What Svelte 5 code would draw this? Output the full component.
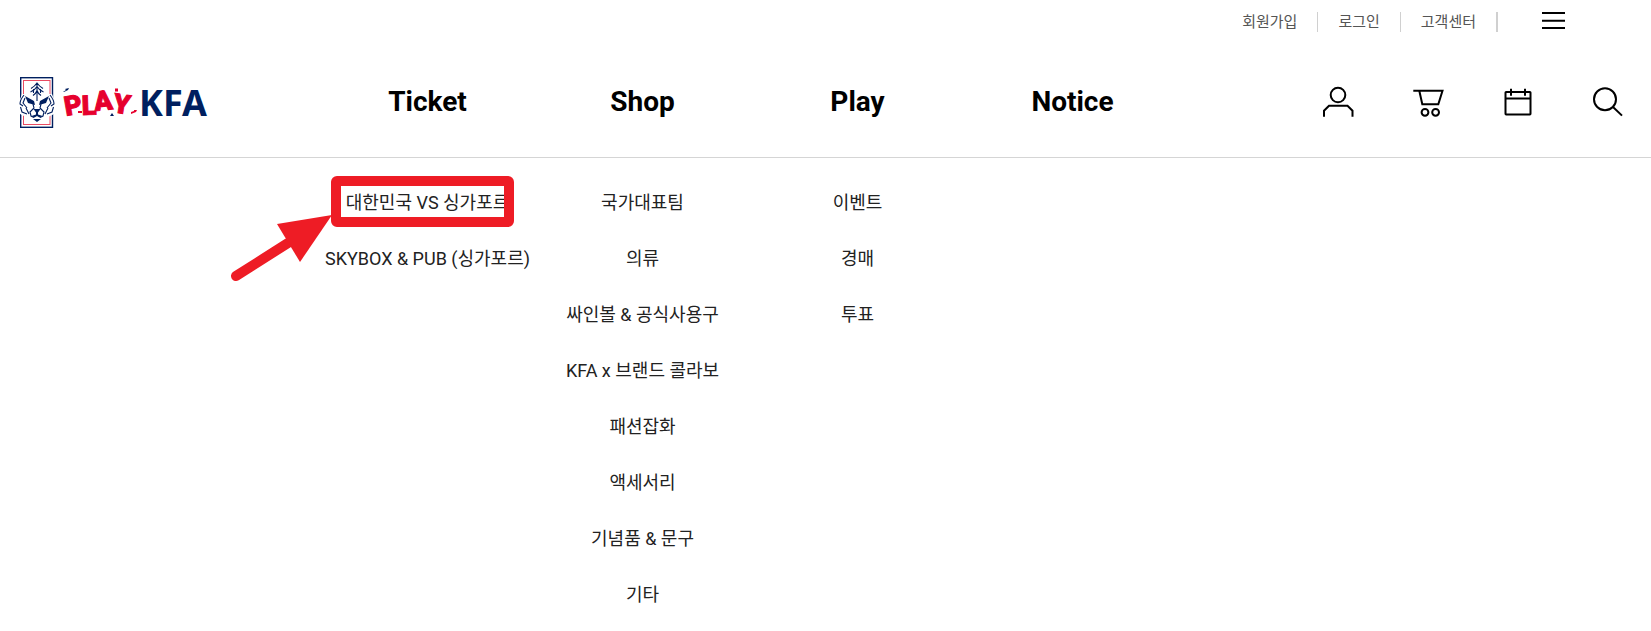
<script>
  const utilities = ['회원가입', '로그인', '고객센터'];
  const columns = [
    { title: 'Ticket', items: ['대한민국 VS 싱가포르', 'SKYBOX & PUB (싱가포르)'], marked: 0 },
    {
      title: 'Shop',
      items: ['국가대표팀', '의류', '싸인볼 & 공식사용구', 'KFA x 브랜드 콜라보', '패션잡화', '액세서리', '기념품 & 문구', '기타']
    },
    { title: 'Play', items: ['이벤트', '경매', '투표'] },
    { title: 'Notice', items: [] }
  ];
</script>

<header>
  <div class="utility">
    <ul>
      {#each utilities as label}
        <li><a href="#top">{label}</a></li>
      {/each}
    </ul>
    <button class="burger" aria-label="전체 메뉴">
      <svg width="24" height="18" viewBox="0 0 24 18"><path d="M0 1h23M0 8.7h23M0 16h23" stroke="#000" stroke-width="2" /></svg>
    </button>
  </div>

  <div class="main row">
    <a class="logo" href="#top" aria-label="PLAY KFA">
      <svg width="190" height="56" viewBox="18 74 190 56">
        <rect x="20.7" y="77.7" width="31.8" height="49.6" fill="#fff" stroke="#001f5f" stroke-width="1.4" />
        <rect x="23.5" y="80.5" width="26.5" height="44" fill="none" stroke="#e94b62" stroke-width="1" />
        <path d="M37 81l7 6 2 7 6 0 3 8-1 12-6 3-3 3-8 4-8-4-3-3-6-3-1-12 3-8 6 0 2-7z" fill="#fff" />
        <g fill="none" stroke="#001f5f" stroke-width="1.1">
          <path d="M31 88.5q4-2.500 6-5.500 2 3 6 5.500M30.500 92q4.500-2 6.500-5.500 2 3.500 6.500 5.500M33 95.500q3-2 4-5 1 3 4 5M37 83v18M33.500 89v4M40.500 89v4" />
          <path d="M24 95q-4 5-4 9l3 2M50 95q4 5 4 9l-3 2M25 98l-2 5 4 5M49 98l2 5-4 5M20.500 107l1.500 5 5 2M53.500 107l-1.500 5-5 2" />
          <path d="M33 104l1 4-4 4 1 4 3 1.500M41 104l-1 4 4 4-1 4-3 1.500M26 108l3 6M48 108l-3 6" />
        </g>
        <g fill="#001f5f">
          <path d="M25 96l9 5 1 4-7-2zM49 96l-9 5-1 4 7-2zM33.500 109h7l-2.500 3.500v2l4.500 1.500-3 1.500-2.500-1.500-2.500 1.500-3-1.500 4.500-1.500v-2zM33 119h8l-4 3z" />
          <path d="M63 92l3-2-1-1 4-1-1 2-4 2z" />
          <path d="M110 116l2-3 2 3z" />
        </g>
        <g fill="#e6002d">
          <text class="play" x="66 82 95 112" y="116 115 111 112" rotate="-10 -2 -6 9">PLAY</text>
          <path d="M78 111h4v2h-4zM115 88.500h3v3h-3zM131 112l3-1 0-1 3 0-1 2-5 2z" />
        </g>
        <text class="kfa" x="139" y="116" fill="#001f5f">KFA</text>
      </svg>
    </a>
    <nav class="columns">
      {#each columns as column}
        <a class="title" href="#top">{column.title}</a>
      {/each}
    </nav>
    <div class="actions">
      <button aria-label="마이페이지">
        <svg viewBox="0 0 40 40"><circle cx="20" cy="13" r="7.3" /><path d="M6 34.7v-6l5-5h18.500l5 5v6" /></svg>
      </button>
      <button aria-label="장바구니">
        <svg viewBox="0 0 40 40"><path d="M5.300 8.700h29.200l-4.200 13.600H14.300L11.300 8.700" /><circle cx="17" cy="30.3" r="3.4" /><circle cx="27.6" cy="30.3" r="3.4" /></svg>
      </button>
      <button aria-label="일정">
        <svg viewBox="0 0 40 40"><rect x="7.5" y="10" width="25" height="22.4" rx="0.6" /><path d="M7.500 16.400h25M13 6.700v7M27 6.700v7" /></svg>
      </button>
      <button aria-label="검색">
        <svg viewBox="0 0 40 40"><circle cx="17" cy="17.2" r="11" /><path d="M25 25l9 8.600" /></svg>
      </button>
    </div>
  </div>
</header>

<div class="panel row">
  <div class="columns menus">
    {#each columns as column}
      <ul>
        {#each column.items as item, i}
          <li>
            <a href="#top">{item}</a>
            {#if column.marked === i}
              <svg class="marker" width="300" height="116" viewBox="220 170 300 116" aria-hidden="true">
                <rect x="336" y="181" width="173" height="41" rx="1" />
                <path class="shaft" d="M236 276l52-33" />
                <path class="head" d="M332 215l-55 9 23 38z" />
              </svg>
            {/if}
          </li>
        {/each}
      </ul>
    {/each}
  </div>
</div>

<style>
  :global(body) {
    margin: 0;
    background: #fff;
    font-family: Roboto, 'Noto Sans CJK KR', sans-serif;
  }
  a {
    color: inherit;
    text-decoration: none;
  }
  ul {
    list-style: none;
    margin: 0;
    padding: 0;
  }
  button {
    display: block;
    padding: 0;
    border: 0;
    background: none;
    cursor: pointer;
  }
  svg {
    display: block;
  }
  header {
    border-bottom: 1px solid #d5d5d5;
  }
  .utility {
    display: flex;
    justify-content: flex-end;
    align-items: flex-start;
    gap: 44px;
    padding: 12px 85px 0 0;
  }
  .utility ul {
    display: flex;
  }
  .utility li {
    padding: 0 20px;
    border-right: 1px solid #d0d0d0;
    font-size: 15px;
    line-height: 20px;
    color: #555;
  }
  .utility li:last-child {
    border-right-width: 2px;
  }
  .row {
    display: grid;
    grid-template-columns: 320fr 860fr 471fr;
  }
  .main {
    align-items: center;
    padding: 28px 0 13px;
  }
  .logo {
    padding-left: 18px;
  }
  .play {
    font: 900 27px Roboto, sans-serif;
    stroke: #e6002d;
    stroke-width: 1;
  }
  .kfa {
    font: 700 36px 'Noto Sans', sans-serif;
  }
  .columns {
    display: grid;
    grid-template-columns: repeat(4, 1fr);
    text-align: center;
  }
  .title {
    font-size: 28px;
    font-weight: 700;
    line-height: 84px;
    color: #000;
  }
  .actions {
    display: flex;
    justify-content: flex-end;
    gap: 50px;
    padding-right: 23px;
  }
  .actions svg {
    width: 40px;
    height: 40px;
    fill: none;
    stroke: #000;
    stroke-width: 2;
  }
  .panel {
    padding: 17px 0 8px;
  }
  .menus {
    grid-column: 2;
  }
  .menus li {
    position: relative;
    font-size: 18px;
    line-height: 56px;
    color: #222;
    white-space: nowrap;
  }
  .menus a {
    display: block;
  }
  .marker {
    position: absolute;
    top: -5px;
    left: calc(50% - 208px);
    pointer-events: none;
  }
  .marker rect,
  .shaft {
    fill: none;
    stroke: #ee1c25;
    stroke-width: 10;
    stroke-linecap: round;
    stroke-linejoin: round;
  }
  .head {
    fill: #ee1c25;
  }
</style>
